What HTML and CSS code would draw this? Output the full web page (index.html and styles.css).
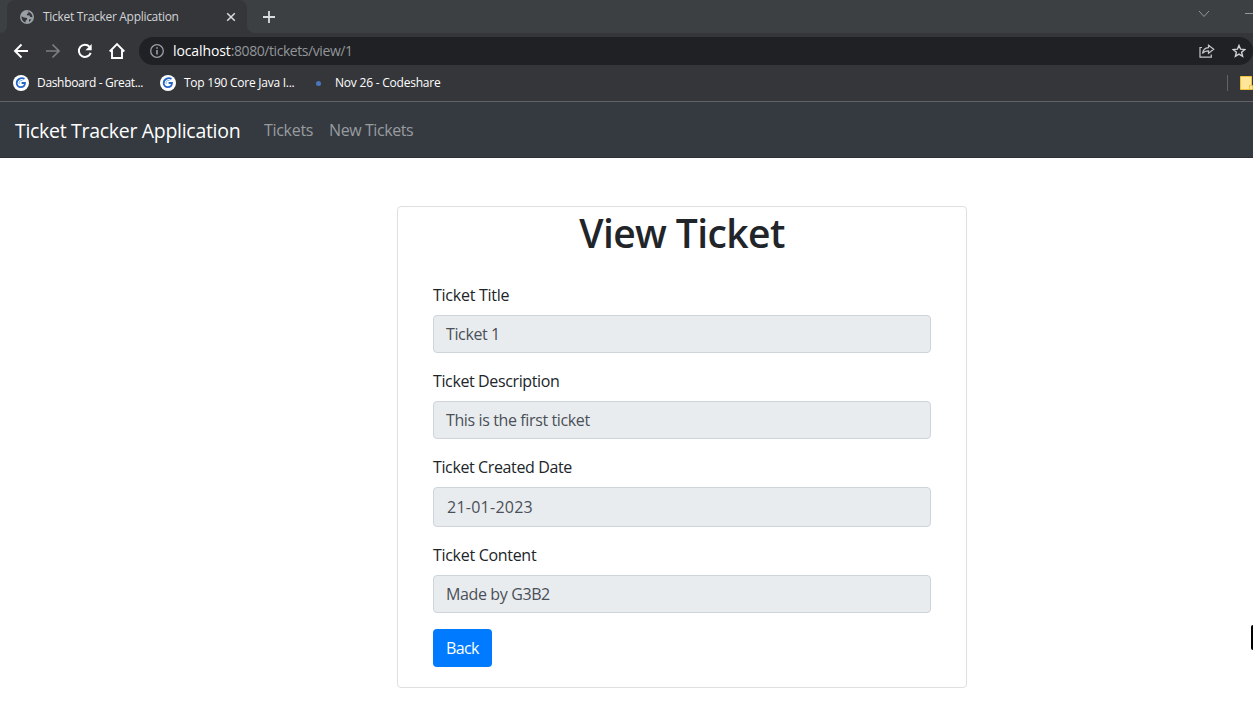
FILE: index.html
```html
<!DOCTYPE html>
<html lang="en">
<head>
<meta charset="utf-8">
<title>Ticket Tracker Application</title>
<link rel="stylesheet" href="styles.css">
</head>
<body>
<div class="window">
  <div class="tabstrip">
    <div class="tab-prev"></div>
    <div class="tab">
      <svg class="globe" width="14" height="14" viewBox="0 0 14 14"><circle cx="7" cy="7" r="7" fill="#9aa0a6"/><path d="M1.5 6.2 4 7.6 7 8v1.5L5.500 11v1.500C3 11.700 1.400 9.500 1.500 6.200ZM6.500 1.500 8.500 1.600 8.300 3.200 6.800 4 7 5.200 9.500 5.500 10.300 7 12.400 7.300C12.600 4.500 10.500 1.700 6.500 1.500ZM9 9.300 11.500 9.500 9 12Z" fill="#35363a"/></svg>
      <span class="tab-title">Ticket Tracker Application</span>
      <svg class="close" width="10" height="10" viewBox="0 0 10 10"><path d="M1.200 1.200 8.800 8.800M8.800 1.200 1.200 8.800" stroke="#dadce0" stroke-width="1.500"/></svg>
    </div>
    <div class="after-tab">
      <svg class="plus" width="12" height="12" viewBox="0 0 12 12"><path d="M6 0V12M0 6H12" stroke="#dadce0" stroke-width="1.800"/></svg>
    </div>
    <svg class="chevron" width="12" height="8" viewBox="0 0 12 8"><path d="M1 1 6 6.500 11 1" fill="none" stroke="#94979a" stroke-width="1"/></svg>
    <div class="minimize"></div>
  </div>
  <div class="toolbar">
    <svg class="icons" width="112" height="18" viewBox="0 0 112 18" fill="none">
      <path d="M15 9H2.500M8.500 2.500 2 9 8.500 15.500" stroke="#fff" stroke-width="1.900"/>
      <path d="M33 9H45.500M39.500 2.500 46 9 39.500 15.500" stroke="#7d7e82" stroke-width="1.700"/>
      <path d="M76.600 4.800A6.100 6.100 0 1 0 77.700 10.800" stroke="#fff" stroke-width="2"/>
      <path d="M78.700 2V8.200H72.400Z" fill="#fff"/>
      <path d="M96.700 9.500 104 2.200 111.300 9.500M99 8V16H109V8" stroke="#fff" stroke-width="1.900"/>
    </svg>
    <div class="omnibox">
      <svg class="info" width="14" height="14" viewBox="0 0 14 14"><circle cx="7" cy="7" r="6.300" fill="none" stroke="#9aa0a6" stroke-width="1.300"/><path d="M7 6V10.500M7 3.200V4.800" stroke="#9aa0a6" stroke-width="1.600"/></svg>
      <span class="url"><span class="host">localhost</span>:8080/tickets/view/1</span>
      <svg class="share" width="16" height="14" viewBox="0 0 16 14" fill="none" stroke="#c4c7ca" stroke-width="1.200"><path d="M3 3.500H1V13.200H12.300V10.500"/><path d="M3.500 9.500C4 6 6 4 9.500 3.700V1.300L14.700 5.300 9.500 9.200V6.800C7 6.800 5 7.500 3.500 9.500Z"/></svg>
      <svg class="star" width="14" height="14" viewBox="0 0 14 14"><path d="M7 1.400 8.600 5.200 12.800 5.500 9.600 8.200 10.600 12.300 7 10.100 3.400 12.300 4.400 8.200 1.200 5.500 5.400 5.200Z" fill="none" stroke="#d0d2d5" stroke-width="1.400"/></svg>
    </div>
  </div>
  <div class="bookmarks">
    <svg class="logo" width="16" height="16" viewBox="0 0 16 16"><circle cx="8" cy="8" r="8" fill="#fff"/><path d="M11.500 3.900C8 2 3.700 4.200 3.700 8.200C3.700 13.500 11.700 13.500 12 8H8.600" fill="none" stroke="#2465c9" stroke-width="1.800"/><path d="M9.500 5.600C7 4.800 5.500 7 6.300 9" fill="none" stroke="#59a3e5" stroke-width=".8"/></svg>
    <span class="bm bm-one">Dashboard - Great...</span>
    <svg class="logo" width="16" height="16" viewBox="0 0 16 16"><circle cx="8" cy="8" r="8" fill="#fff"/><path d="M11.500 3.900C8 2 3.700 4.200 3.700 8.200C3.700 13.500 11.700 13.500 12 8H8.600" fill="none" stroke="#2465c9" stroke-width="1.800"/><path d="M9.500 5.600C7 4.800 5.500 7 6.300 9" fill="none" stroke="#59a3e5" stroke-width=".8"/></svg>
    <span class="bm bm-two">Top 190 Core Java I...</span>
    <span class="dot"></span>
    <span class="bm bm-three">Nov 26 - Codeshare</span>
    <div class="divider"></div>
    <svg class="folder" width="13" height="14" viewBox="0 0 13 14"><path d="M.5.500H11.500V9.500H12.500V13.500H.5Z" fill="#ffe69a" stroke="#f0c43c"/><path d="M9.500 13V9.500H12" fill="none" stroke="#f0c43c"/></svg>
  </div>
  <nav class="navbar">
    <span class="brand">Ticket Tracker Application</span>
    <a class="link link-tickets">Tickets</a>
    <a class="link link-new">New Tickets</a>
  </nav>
  <main class="page">
    <section class="card">
      <h1 class="heading"><span>View Ticket</span></h1>
      <div class="form">
        <div class="label title-label">Ticket Title</div>
        <div class="field">Ticket 1</div>
        <div class="label">Ticket Description</div>
        <div class="field">This is the first ticket</div>
        <div class="label">Ticket Created Date</div>
        <div class="field date">21-01-2023</div>
        <div class="label content-label">Ticket Content</div>
        <div class="field">Made by G3B2</div>
        <a class="button">Back</a>
      </div>
    </section>
    <div class="edge-handle"></div>
  </main>
</div>
</body>
</html>
```
FILE: styles.css
```css
* { box-sizing: border-box; }
body { margin: 0; background: #fff; font-family: "Open Sans", "Noto Sans", sans-serif; overflow: hidden; }
svg { display: block; flex: none; }
span, a { white-space: nowrap; }
.window { width: 1253px; height: 720px; overflow: hidden; display: flex; flex-direction: column; }

.tabstrip { height: 33px; flex: none; background: #35363a; display: flex; }
.tab-prev { width: 7px; background: #3c4043; border-bottom-right-radius: 7px; }
.tab { width: 240px; height: 33px; display: flex; align-items: center; padding: 0 11px 0 13px; background: #35363a; border-radius: 8px 8px 0 0; box-shadow: 0 -8px 0 #3c4043; }
.globe { margin-right: 9px; }
.tab-title { flex: 1; padding-bottom: 1px; font-size: 12px; color: #d2d4d7; letter-spacing: -.3px; }
.after-tab { flex: 1; background: #3c4043; border-bottom-left-radius: 8px; display: flex; align-items: center; padding-left: 16px; }
.chevron { box-sizing: content-box; background: #3c4043; padding: 10px 35px 15px 0; }
.minimize { width: 8px; background: linear-gradient(#94979a, #94979a) 0 13px / 8px 1px no-repeat #3c4043; }

.toolbar { height: 36px; flex: none; background: #35363a; display: flex; align-items: center; padding-left: 13px; }
.icons { margin-right: 14px; overflow: visible; }
.omnibox { flex: 1; height: 28px; background: #202124; border-radius: 14px; display: flex; align-items: center; padding: 0 7px 0 11px; }
.url { flex: 1; margin-left: 9px; padding-bottom: 1px; font-size: 14px; color: #92969b; letter-spacing: -.43px; }
.host { color: #fff; letter-spacing: -.1px; }
.share { margin-right: 17px; }

.bookmarks { height: 33px; flex: none; background: #35363a; border-bottom: 1px solid #626366; display: flex; align-items: center; padding: 0 0 4px 13px; }
.bm { margin-left: 8px; padding-bottom: 1px; font-size: 12px; color: #fff; }
.bm-one { width: 123px; letter-spacing: -.33px; }
.bm-two { width: 132px; letter-spacing: -.25px; }
.bm-three { flex: 1; margin-left: 14px; letter-spacing: -.22px; }
.dot { width: 5px; height: 5px; border-radius: 50%; background: #4a76bd; }
.divider { width: 1px; height: 16px; background: #626366; margin-right: 12px; }

.navbar { height: 56px; flex: none; background: #343a40; display: flex; align-items: center; padding: 2px 0 0 15px; border-bottom: 1px solid #2f3037; }
.brand { width: 249px; font-size: 19.5px; letter-spacing: -.3px; color: #fff; }
.link { padding-bottom: 1px; font-size: 16px; letter-spacing: -.42px; color: #999c9f; }
.link-tickets { width: 65px; letter-spacing: -.3px; }

.page { flex: 1; position: relative; padding: 48px 0 0 397px; }
.card { width: 570px; height: 482px; border: 1px solid #dfdfdf; border-radius: 4px; }
.heading { margin: 0; height: 48px; padding-top: 2px; text-align: center; font-size: 39px; line-height: 48px; font-weight: 600; letter-spacing: -.6px; color: #212529; }
.form { padding: 28px 35px 0; font-size: 16px; line-height: 24px; color: #212529; letter-spacing: -.38px; }
.label { height: 24px; margin-bottom: 8px; }
.title-label { letter-spacing: -.25px; }
.content-label { letter-spacing: -.3px; }
.field { height: 38px; margin-bottom: 16px; padding: 6px 12px; border: 1px solid #ced4da; border-radius: 4px; background: #e9ecef; color: #495057; }
.date { height: 40px; padding: 7px 13px; letter-spacing: .25px; }
.button { display: inline-block; width: 59px; height: 38px; padding: 7px 13px; border-radius: 4px; background: #007bff; color: #fff; letter-spacing: -.6px; }
.edge-handle { position: absolute; right: 0; top: 467px; width: 2px; height: 25px; background: #000; border-radius: 2px 0 0 2px; }
```
